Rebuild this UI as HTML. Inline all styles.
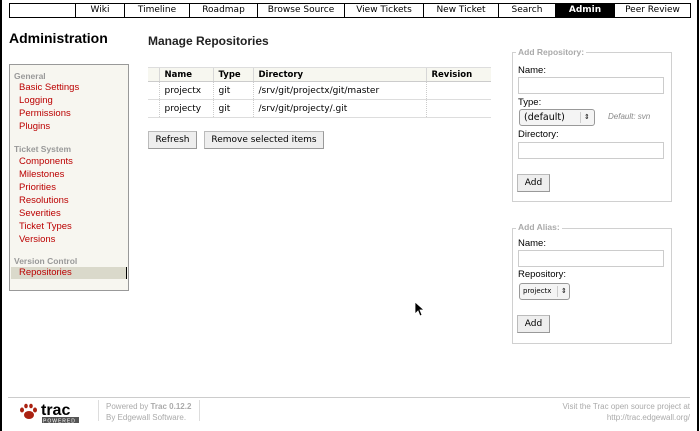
<!DOCTYPE html>
<html><head><meta charset="utf-8"><style>
*{margin:0;padding:0;box-sizing:border-box}
body{width:700px;height:431px;background:#fff;font-family:"DejaVu Sans","Liberation Sans",sans-serif;font-size:9px;color:#000;position:relative;overflow:hidden}
.a{position:absolute}
.vl{position:absolute;top:0;width:2px;height:431px;background:#000}
#nav{position:absolute;left:9px;top:3px;width:682px;height:15px;border:1px solid #000;background:#fff}
#nav div{position:absolute;top:0;height:13px;border-left:1px solid #000;text-align:center;line-height:13px;font-size:9px}
#nav div.on{background:#000;color:#fff;font-weight:bold}
h1{position:absolute;left:9px;top:30px;font-size:14px;font-weight:bold;font-family:"Liberation Sans",sans-serif}
h2{position:absolute;left:148px;top:34px;font-size:12px;font-weight:bold;font-family:"Liberation Sans",sans-serif;color:#222}
#side{position:absolute;left:9px;top:64px;width:120px;height:227px;background:#f7f6f0;border:1px solid #999;font-family:"Liberation Sans",sans-serif;font-size:9.5px}
#side .h{position:absolute;left:4px;color:#999;font-weight:bold;font-size:8.5px}
#side .l{position:absolute;left:9px;color:#b00}
#side .sel{position:absolute;left:1px;top:202px;width:116px;height:12px;background:#dad9cb;border-right:1px solid #000}
table{position:absolute;left:148px;top:67px;border-collapse:collapse;width:343px}
th{background:#f7f7f0;font-size:8.5px;text-align:left;height:14px;padding-left:5px;border-left:1px solid #d7d7d7;border-bottom:1px solid #ccc;border-top:1px solid #ddd}
td{height:18px;padding-left:5px;border-left:1px dotted #ccc;border-bottom:1px solid #ddd;font-size:9px}
.btn{position:absolute;height:18px;background:#eee;border:1px solid #bbb;border-right-color:#999;border-bottom-color:#999;text-align:center;line-height:16px;font-size:9px}
fieldset{position:absolute;border:1px solid #d0d0d0}
.lg{position:absolute;color:#aaa;font-weight:bold;font-size:8.5px;background:#fff;padding:0 2px;font-family:"Liberation Sans",sans-serif}
.lb{position:absolute;font-family:"Liberation Sans",sans-serif;font-size:9.5px}
.in{position:absolute;height:17px;border:1px solid #ccc;background:#fff}
.sl{position:absolute;border:1px solid #999;border-radius:3px;background:#f4f4f4}
.f{position:absolute;color:#aaa;font-family:"Liberation Sans",sans-serif;font-size:8px;line-height:11px}
</style></head><body>
<div class="vl" style="left:0"></div><div class="vl" style="left:697px"></div>
<div id="nav">
<div style="left:65px;width:49px">Wiki</div>
<div style="left:114px;width:65px">Timeline</div>
<div style="left:179px;width:68px">Roadmap</div>
<div style="left:247px;width:87px">Browse Source</div>
<div style="left:334px;width:79px">View Tickets</div>
<div style="left:413px;width:75px">New Ticket</div>
<div style="left:488px;width:57px">Search</div>
<div class="on" style="left:545px;width:59px">Admin</div>
<div style="left:604px;width:76px">Peer Review</div>
</div>
<h1>Administration</h1>
<h2>Manage Repositories</h2>
<div id="side">
<div class="h" style="top:6px">General</div>
<div class="l" style="top:17px">Basic Settings</div>
<div class="l" style="top:30px">Logging</div>
<div class="l" style="top:43px">Permissions</div>
<div class="l" style="top:56px">Plugins</div>
<div class="h" style="top:79px">Ticket System</div>
<div class="l" style="top:91px">Components</div>
<div class="l" style="top:104px">Milestones</div>
<div class="l" style="top:117px">Priorities</div>
<div class="l" style="top:130px">Resolutions</div>
<div class="l" style="top:143px">Severities</div>
<div class="l" style="top:156px">Ticket Types</div>
<div class="l" style="top:169px">Versions</div>
<div class="h" style="top:191px">Version Control</div>
<div class="sel"></div>
<div class="l" style="top:202px">Repositories</div>
</div>
<table>
<tr><th style="width:11px;border-left:none"></th><th style="width:54px">Name</th><th style="width:40px">Type</th><th style="width:173px">Directory</th><th>Revision</th></tr>
<tr><td style="border-left:none"></td><td>projectx</td><td>git</td><td>/srv/git/projectx/git/master</td><td></td></tr>
<tr><td style="border-left:none"></td><td>projecty</td><td>git</td><td>/srv/git/projecty/.git</td><td></td></tr>
</table>
<div class="btn" style="left:148px;top:131px;width:49px">Refresh</div>
<div class="btn" style="left:204px;top:131px;width:120px">Remove selected items</div>

<fieldset style="left:512px;top:52px;width:160px;height:150px"></fieldset>
<div class="lg" style="left:516px;top:47px">Add Repository:</div>
<div class="lb" style="left:518px;top:65px">Name:</div>
<div class="in" style="left:518px;top:77px;width:146px"></div>
<div class="lb" style="left:518px;top:97px">Type:</div>
<div class="sl" style="left:519px;top:109px;width:76px;height:17px;font-size:9.5px;line-height:15px;padding-left:4px">(default)<span style="position:absolute;left:60px;top:2px;height:11px;border-left:1px solid #ccc;padding-left:3px;font-size:7px;line-height:11px">⇕</span></div>
<div class="a" style="left:608px;top:112px;font-style:italic;color:#888;font-size:8px;font-family:'Liberation Sans',sans-serif">Default: svn</div>
<div class="lb" style="left:518px;top:129px">Directory:</div>
<div class="in" style="left:518px;top:142px;width:146px"></div>
<div class="btn" style="left:517px;top:174px;width:33px">Add</div>

<fieldset style="left:512px;top:228px;width:160px;height:116px"></fieldset>
<div class="lg" style="left:516px;top:222px">Add Alias:</div>
<div class="lb" style="left:518px;top:238px">Name:</div>
<div class="in" style="left:518px;top:250px;width:146px"></div>
<div class="lb" style="left:518px;top:269px">Repository:</div>
<div class="sl" style="left:519px;top:283px;width:51px;height:17px;font-size:7px;line-height:15px;padding-left:3px">projectx<span style="position:absolute;left:37px;top:2px;height:11px;border-left:1px solid #ccc;padding-left:3px;line-height:11px">⇕</span></div>
<div class="btn" style="left:517px;top:315px;width:33px">Add</div>

<svg class="a" style="left:414px;top:301px" width="12" height="17" viewBox="0 0 12 17"><path d="M1 1 L1 13 L4 10 L6 15 L8 14 L6 9 L10 9 Z" fill="#000" stroke="#fff" stroke-width="0.8"/></svg>

<div class="a" style="left:8px;top:397px;width:682px;height:1px;background:#ccc"></div>
<svg class="a" style="left:18px;top:400px" width="65" height="24" viewBox="0 0 65 24">
<ellipse cx="11" cy="15" rx="5" ry="4" fill="#a21"/>
<ellipse cx="4" cy="10" rx="2" ry="2.5" fill="#a21"/><ellipse cx="8" cy="6" rx="1.8" ry="2.3" fill="#a21"/><ellipse cx="13" cy="6" rx="1.8" ry="2.3" fill="#a21"/><ellipse cx="17" cy="10" rx="2" ry="2.5" fill="#a21"/>
<text x="23" y="15" font-family="Liberation Sans" font-weight="bold" font-size="16" fill="#000">trac</text>
<rect x="24" y="17" width="37" height="6" fill="#555"/>
<text x="25" y="22.5" font-family="Liberation Sans" font-size="5" fill="#fff" letter-spacing="1">POWERED</text>
</svg>
<div class="a" style="left:98px;top:400px;width:1px;height:21px;background:#ddd"></div>
<div class="f" style="left:106px;top:401px">Powered by <b>Trac 0.12.2</b><br>By Edgewall Software.</div>
<div class="a" style="left:199px;top:400px;width:1px;height:21px;background:#ddd"></div>
<div class="f" style="left:520px;top:401px;width:170px;text-align:right">Visit the Trac open source project at<br>http://trac.edgewall.org/</div>
</body></html>
